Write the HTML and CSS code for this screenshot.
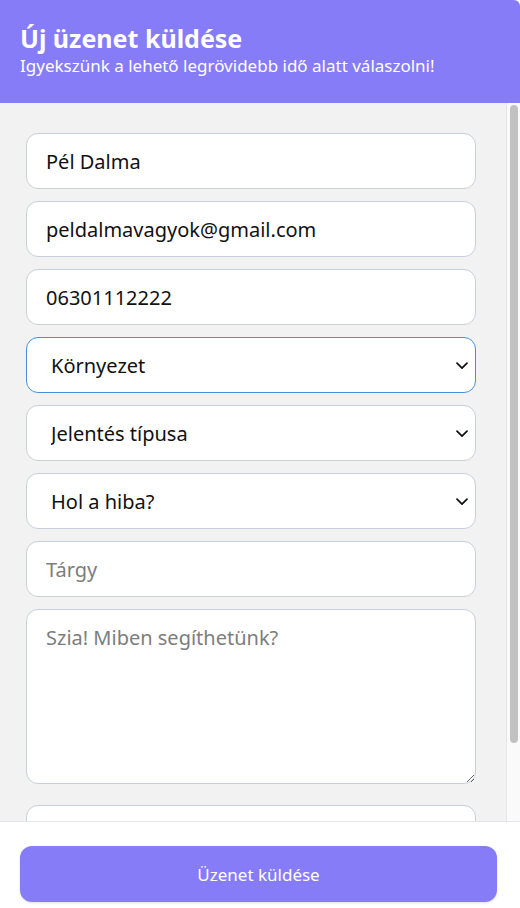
FILE: index.html
```html
<!DOCTYPE html>
<html lang="hu">
<head>
<meta charset="utf-8">
<title>Új üzenet küldése</title>
<link rel="stylesheet" href="styles.css">
</head>
<body>
<div class="widget">
  <header class="head">
    <h1 class="title">Új üzenet küldése</h1>
    <p class="subtitle">Igyekszünk a lehető legrövidebb idő alatt válaszolni!</p>
  </header>
  <div class="body">
    <main class="scroller">
      <form class="form">
        <input class="field" type="text" value="Pél Dalma">
        <input class="field" type="email" value="peldalmavagyok@gmail.com">
        <input class="field" type="tel" value="06301112222">
        <div class="select-wrap">
          <select class="field select focused"><option>Környezet</option></select>
          <svg class="chev" viewBox="0 0 12 8" width="12" height="8"><path d="M1 1.2 6 6.2 11 1.2" fill="none" stroke="#111" stroke-width="1.7" stroke-linecap="round" stroke-linejoin="round"/></svg>
        </div>
        <div class="select-wrap">
          <select class="field select"><option>Jelentés típusa</option></select>
          <svg class="chev" viewBox="0 0 12 8" width="12" height="8"><path d="M1 1.2 6 6.2 11 1.2" fill="none" stroke="#111" stroke-width="1.7" stroke-linecap="round" stroke-linejoin="round"/></svg>
        </div>
        <div class="select-wrap">
          <select class="field select"><option>Hol a hiba?</option></select>
          <svg class="chev" viewBox="0 0 12 8" width="12" height="8"><path d="M1 1.2 6 6.2 11 1.2" fill="none" stroke="#111" stroke-width="1.7" stroke-linecap="round" stroke-linejoin="round"/></svg>
        </div>
        <input class="field" type="text" placeholder="Tárgy">
        <textarea class="field area" placeholder="Szia! Miben segíthetünk?"></textarea>
        <input class="field extra" type="text">
      </form>
    </main>
    <div class="scrollbar"><div class="thumb"></div></div>
  </div>
  <footer class="foot">
    <button class="send" type="button">Üzenet küldése</button>
  </footer>
</div>
</body>
</html>
```

FILE: styles.css
```css
* { box-sizing: border-box; }
html, body { margin: 0; padding: 0; }
body {
  font-family: "Noto Sans", "Open Sans", sans-serif;
  background: #ffffff;
}
.widget {
  width: 520px;
  height: 908px;
  display: flex;
  flex-direction: column;
  overflow: hidden;
}
.head {
  height: 103px;
  flex: none;
  background: #877cf8;
  color: #ffffff;
  padding: 23px 20px 0;
  border-top-right-radius: 6px;
}
.title {
  margin: 0;
  font-size: 25px;
  font-weight: 700;
  line-height: 31px;
}
.subtitle {
  margin: 0;
  font-size: 17px;
  line-height: 24px;
}
.body {
  flex: 1;
  min-height: 0;
  display: flex;
  background: #f2f2f2;
}
.scroller {
  flex: 1;
  min-width: 0;
  overflow: hidden;
}
.scrollbar {
  flex: none;
  width: 14px;
  background: #fafafa;
  border-left: 1px solid #e6e6e6;
  padding: 2px 2px 0 3px;
}
.thumb {
  height: 638px;
  background: #c1c1c1;
  border-radius: 4px;
}
.form {
  display: flex;
  flex-direction: column;
  gap: 12px;
  padding: 30px 30px 40px 26px;
}
.field {
  display: block;
  width: 450px;
  height: 56px;
  border: 1px solid #c6d0dd;
  border-radius: 12px;
  background: #ffffff;
  padding: 0 19px;
  font-family: inherit;
  font-size: 20px;
  color: #111111;
  outline: none;
  margin: 0;
}
.field::placeholder { color: #7d7d7d; }
.select-wrap { position: relative; }
.select {
  appearance: none;
  -webkit-appearance: none;
  padding-left: 24px;
}
.focused { border-color: #4a8fdb; }
.chev {
  position: absolute;
  left: 430px;
  top: 25px;
  pointer-events: none;
}
.area {
  height: 175px;
  padding-top: 14px;
  resize: vertical;
  margin-bottom: 9px;
}
.foot {
  height: 87px;
  flex: none;
  background: #ffffff;
  border-top: 1px solid #e3e6ea;
  padding: 24px 23px 0 20px;
}
.send {
  display: block;
  width: 100%;
  height: 56px;
  border: none;
  border-radius: 12px;
  background: #877cf8;
  color: #ffffff;
  font-family: inherit;
  font-size: 17px;
  box-shadow: 0 1px 3px rgba(0,0,0,0.12);
}
```
